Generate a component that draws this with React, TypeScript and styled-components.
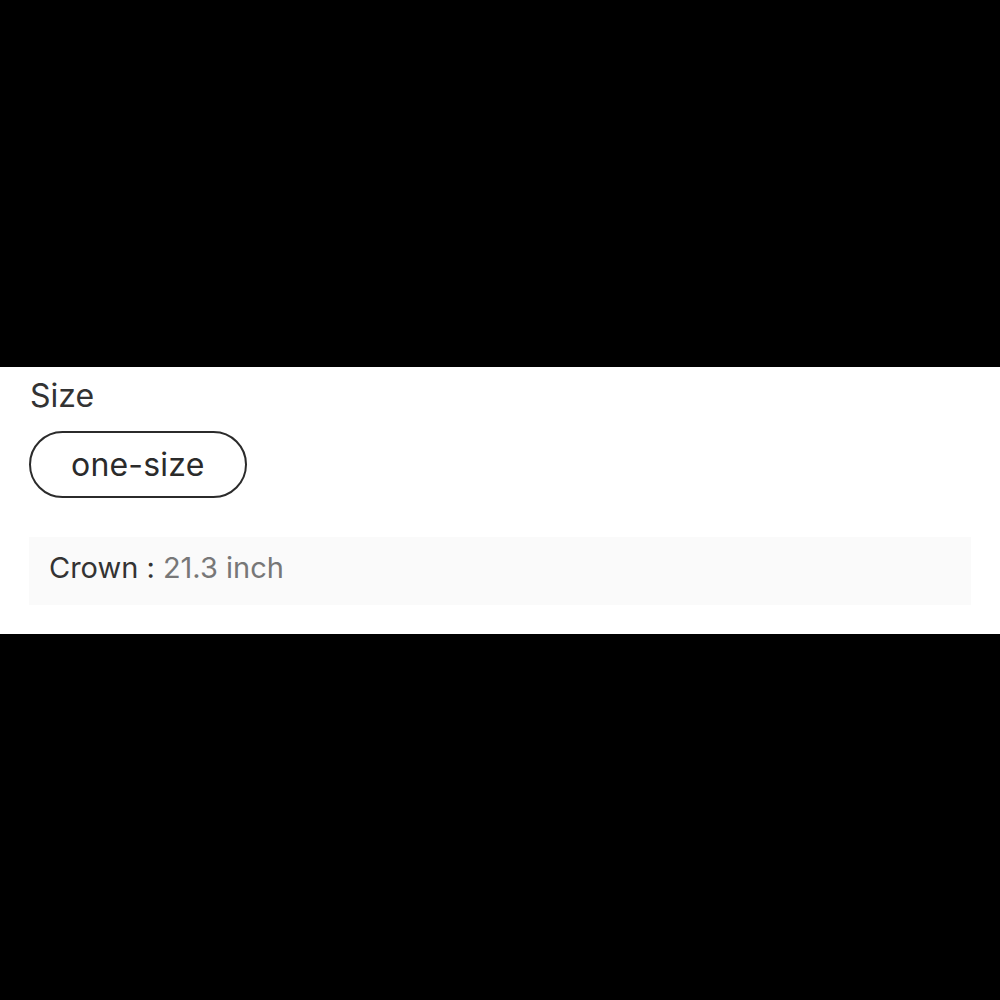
import React from 'react';
import styled, { createGlobalStyle } from 'styled-components';

const GlobalStyle = createGlobalStyle`
  html, body {
    margin: 0;
    padding: 0;
    background: #000;
  }
  body {
    font-family: Inter, 'Liberation Sans', sans-serif;
  }
`;

const Screen = styled.div`
  height: 1000px;
  display: flex;
  flex-direction: column;
  justify-content: center;
`;

const Panel = styled.section`
  background: #fff;
  padding: 9px 29px 29px 29px;
  display: flex;
  flex-direction: column;
`;

const Label = styled.div`
  font-size: 32px;
  line-height: 40px;
  color: #333;
  padding-left: 1px;
`;

const Options = styled.div`
  display: flex;
  gap: 12px;
  margin-top: 15px;
`;

const SizeChip = styled.button<{ $selected?: boolean }>`
  height: 67px;
  padding: 0 40px;
  border-radius: 34px;
  border: 2px solid ${(p) => (p.$selected ? '#2b2b2b' : '#ccc')};
  background: #fff;
  font-family: inherit;
  font-size: 32px;
  letter-spacing: 0.2px;
  color: #2b2b2b;
  cursor: pointer;
`;

const InfoBox = styled.div`
  margin-top: 39px;
  height: 68px;
  box-sizing: border-box;
  background: #fafafa;
  display: flex;
  align-items: center;
  padding: 0 20px 6px;
  font-size: 29px;
`;

const InfoKey = styled.span`
  color: #333;
`;

const InfoValue = styled.span`
  color: #777;
  margin-left: 8px;
`;

export default function App() {
  return (
    <>
      <GlobalStyle />
      <Screen>
        <Panel>
          <Label>Size</Label>
          <Options>
            <SizeChip $selected>one-size</SizeChip>
          </Options>
          <InfoBox>
            <InfoKey>Crown :</InfoKey>
            <InfoValue>21.3 inch</InfoValue>
          </InfoBox>
        </Panel>
      </Screen>
    </>
  );
}
